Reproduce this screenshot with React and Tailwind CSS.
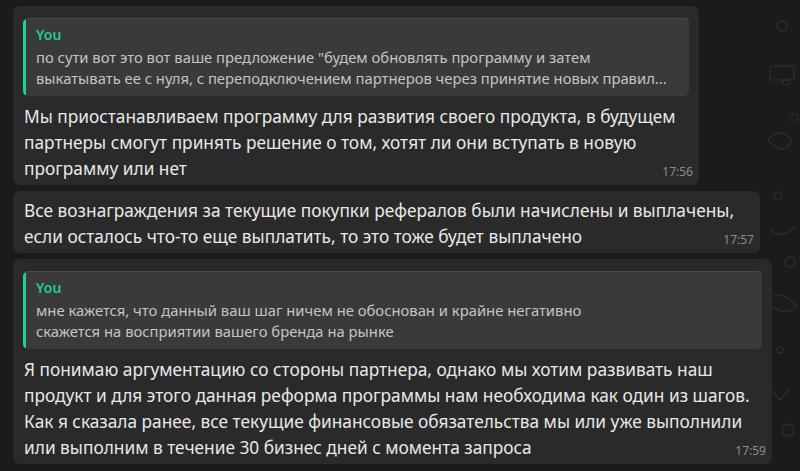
import React from 'react'

const font = { fontFamily: '"Noto Sans", "Open Sans", sans-serif' }

function Quote({ lines }) {
  return (
    <div className="flex rounded-[5px] border-t border-[#4d4d4d] bg-[#3a3a3a] overflow-hidden">
      <div className="w-[3px] shrink-0 bg-[#1fd1a0]" />
      <div className="px-[10px] pt-[7px] pb-[7px]">
        <div className="mb-[3px] text-[14px] leading-[18px] font-semibold text-[#21c996]">You</div>
        {lines.map((l) => (
          <div key={l} className="text-[14.8px] leading-[21px] whitespace-nowrap text-[#c4c4c4]">
            {l}
          </div>
        ))}
      </div>
    </div>
  )
}

function Bubble({ quote, lines, time, width }) {
  return (
    <div className={`rounded-[7px] bg-[#2a2a2a] px-[10px] pb-[3px] ${quote ? 'pt-[12px]' : 'pt-[7px]'} ${width}`}>
      {quote && <Quote lines={quote} />}
      <div className={`relative px-[1px] ${quote ? 'mt-[8px]' : ''}`}>
        {lines.map((l) => (
          <div key={l} className="text-[17.3px] leading-[26px] whitespace-nowrap text-[#e8e8e8]">
            {l}
          </div>
        ))}
        <div className="absolute right-[-4px] bottom-[3px] text-[12px] leading-[14px] text-[#8c8c8c]">{time}</div>
      </div>
    </div>
  )
}

function Doodles() {
  return (
    <svg className="absolute right-0 top-0" width="40" height="471" viewBox="0 0 40 471" fill="none" stroke="#2c2c2c" strokeWidth="1.5">
      <circle cx="22" cy="26" r="5" />
      <circle cx="26" cy="82" r="3" />
      <rect x="10" y="66" width="24" height="14" rx="3" />
      <circle cx="34" cy="118" r="4" />
      <path d="M8 140 q10 -14 24 0 q-8 18 -24 0z" />
      <circle cx="18" cy="196" r="4" />
      <path d="M10 230 q14 10 26 -4" />
      <circle cx="30" cy="262" r="5" />
      <path d="M6 300 q16 -12 30 6 q-12 14 -30 -6z" />
      <circle cx="20" cy="350" r="3" />
      <path d="M12 390 l8 10 l10 -12" />
      <circle cx="28" cy="430" r="6" />
    </svg>
  )
}

export default function App() {
  return (
    <div className="relative h-[471px] w-[800px] overflow-hidden bg-[#1b1b1b]" style={font}>
      <Doodles />
      <div className="flex flex-col items-start gap-[6px] pl-[13px] pt-[6px]">
        <Bubble
          width="w-[686px]"
          quote={[
            'по сути вот это вот ваше предложение "будем обновлять программу и затем',
            'выкатывать ее с нуля, с переподключением партнеров через принятие новых правил...',
          ]}
          lines={[
            'Мы приостанавливаем программу для развития своего продукта, в будущем',
            'партнеры смогут принять решение о том, хотят ли они вступать в новую',
            'программу или нет',
          ]}
          time="17:56"
        />
        <Bubble
          width="w-[747px]"
          lines={[
            'Все вознаграждения за текущие покупки рефералов были начислены и выплачены,',
            'если осталось что-то еще выплатить, то это тоже будет выплачено',
          ]}
          time="17:57"
        />
        <Bubble
          width="w-[759px]"
          quote={[
            'мне кажется, что данный ваш шаг ничем не обоснован и крайне негативно',
            'скажется на восприятии вашего бренда на рынке',
          ]}
          lines={[
            'Я понимаю аргументацию со стороны партнера, однако мы хотим развивать наш',
            'продукт и для этого данная реформа программы нам необходима как один из шагов.',
            'Как я сказала ранее, все текущие финансовые обязательства мы или уже выполнили',
            'или выполним в течение 30 бизнес дней с момента запроса',
          ]}
          time="17:59"
        />
      </div>
    </div>
  )
}
